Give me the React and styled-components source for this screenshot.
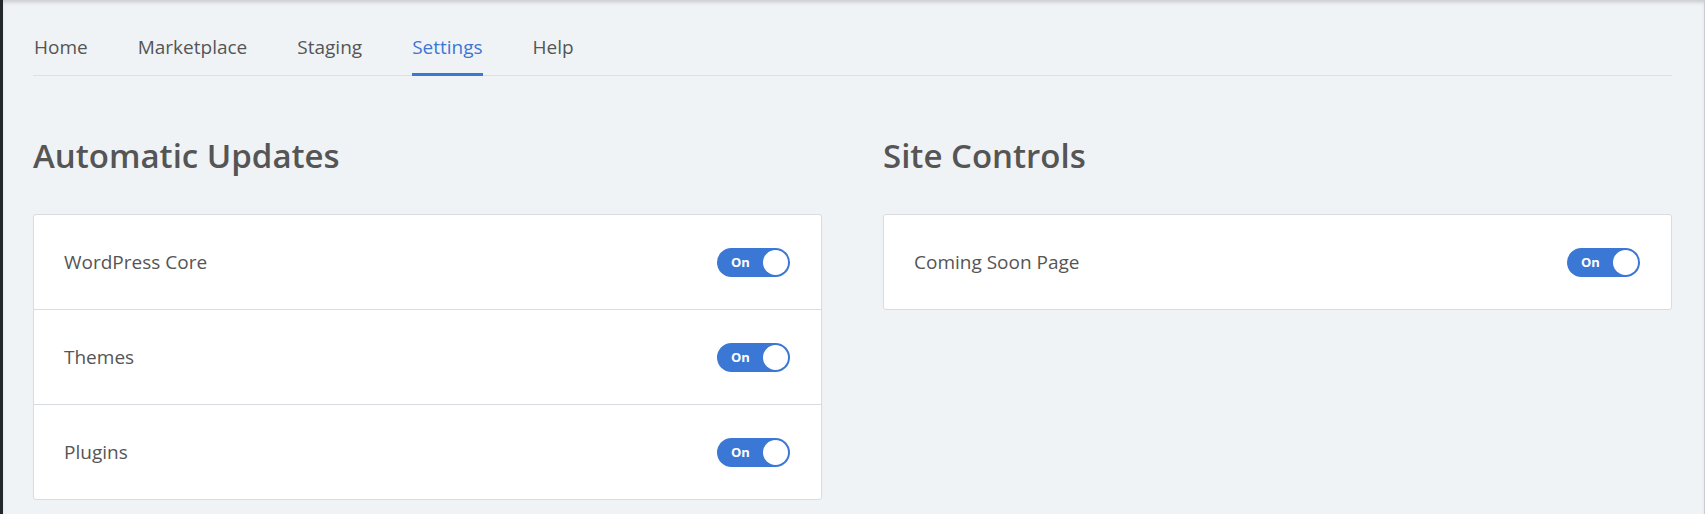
import React, { useState } from 'react';
import styled, { createGlobalStyle } from 'styled-components';

const GlobalStyle = createGlobalStyle`
    html, body {
        margin: 0;
        padding: 0;
        background: #f0f3f6;
    }
    body {
        font-family: "Open Sans", "Noto Sans", "Liberation Sans", sans-serif;
        color: #555;
    }
`;

const Frame = styled.div`
    display: flex;
    min-height: 514px;
    border-left: 3px solid #23282d;
    border-right: 1px solid #c9cdd1;
    box-shadow: inset 0 4px 4px -2px rgba(0, 0, 0, 0.18);
`;

const Main = styled.main`
    flex: 1;
    padding: 0 32px 0 30px;
`;

const Tabs = styled.nav`
    display: flex;
    gap: 50px;
    margin-top: 35px;
    border-bottom: 1px solid #dcdfe3;
    padding-left: 1px;
`;

const Tab = styled.a`
    position: relative;
    display: block;
    font-size: 19px;
    line-height: 24px;
    padding-bottom: 16px;
    color: ${p => (p.$active ? '#3b77d5' : '#555')};
    text-decoration: none;
    cursor: pointer;
    &::after {
        content: '';
        position: absolute;
        left: 0;
        right: 0;
        bottom: -1px;
        height: 3px;
        background: ${p => (p.$active ? '#3b77d5' : 'transparent')};
    }
`;

const Columns = styled.div`
    display: grid;
    grid-template-columns: 1fr 1fr;
    gap: 61px;
    margin-top: 58px;
`;

const Section = styled.section`
    display: flex;
    flex-direction: column;
`;

const Heading = styled.h2`
    margin: 0 0 36px;
    font-size: 33px;
    line-height: 44px;
    font-weight: 600;
    color: #555;
`;

const Card = styled.div`
    background: #fff;
    border: 1px solid #d8dce0;
    border-radius: 3px;
`;

const Row = styled.div`
    display: flex;
    align-items: center;
    justify-content: space-between;
    height: 94px;
    padding: 0 31px 0 30px;
    & + & {
        border-top: 1px solid #d8dce0;
    }
`;

const Label = styled.span`
    font-size: 19px;
    color: #555;
`;

const Switch = styled.button`
    position: relative;
    width: 73px;
    height: 29px;
    border: none;
    border-radius: 15px;
    padding: 0 0 0 14px;
    background: ${p => (p.$on ? '#3b77d5' : '#b8bec5')};
    color: #fff;
    font-family: inherit;
    font-size: 13px;
    font-weight: 700;
    text-align: left;
    cursor: pointer;
`;

const Knob = styled.span`
    position: absolute;
    top: 2px;
    right: ${p => (p.$on ? '2px' : '46px')};
    width: 25px;
    height: 25px;
    border-radius: 50%;
    background: #fff;
`;

const Toggle = ({ initial = true }) => {
    const [on, setOn] = useState(initial);
    return (
        <Switch $on={on} onClick={() => setOn(!on)}>
            {on ? 'On' : ''}
            <Knob $on={on} />
        </Switch>
    );
};

const tabs = ['Home', 'Marketplace', 'Staging', 'Settings', 'Help'];

const App = () => {
    return (
        <>
            <GlobalStyle />
            <Frame>
                <Main>
                    <Tabs>
                        {tabs.map(t => (
                            <Tab key={t} $active={t === 'Settings'}>
                                {t}
                            </Tab>
                        ))}
                    </Tabs>
                    <Columns>
                        <Section>
                            <Heading>Automatic Updates</Heading>
                            <Card>
                                <Row>
                                    <Label>WordPress Core</Label>
                                    <Toggle />
                                </Row>
                                <Row>
                                    <Label>Themes</Label>
                                    <Toggle />
                                </Row>
                                <Row>
                                    <Label>Plugins</Label>
                                    <Toggle />
                                </Row>
                            </Card>
                        </Section>
                        <Section>
                            <Heading>Site Controls</Heading>
                            <Card>
                                <Row>
                                    <Label>Coming Soon Page</Label>
                                    <Toggle />
                                </Row>
                            </Card>
                        </Section>
                    </Columns>
                </Main>
            </Frame>
        </>
    );
};

export default App;
